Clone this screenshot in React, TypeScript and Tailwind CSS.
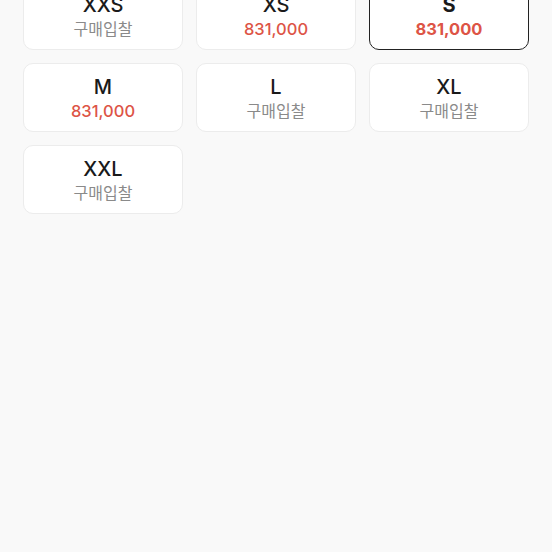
import React from "react";

type Item = { size: string; price?: string; selected?: boolean };

const items: Item[] = [
  { size: "XXS" },
  { size: "XS", price: "831,000" },
  { size: "S", price: "831,000", selected: true },
  { size: "M", price: "831,000" },
  { size: "L" },
  { size: "XL" },
  { size: "XXL" },
];

export default function App() {
  return (
    <div
      className="w-[552px] h-[552px] overflow-hidden bg-[#f9f9f9]"
      style={{ fontFamily: 'Inter, "Noto Sans CJK KR", sans-serif' }}
    >
      <div className="grid grid-cols-[160px_160px_160px] gap-[13px] pl-[23px] mt-[-19px]">
        {items.map((it) => (
          <div
            key={it.size}
            className={
              it.selected
                ? "h-[69px] rounded-[10px] bg-white border-[1.5px] border-[#222] flex flex-col items-center pt-[11px]"
                : "h-[69px] rounded-[10px] bg-white border border-[#ececec] flex flex-col items-center pt-[11px]"
            }
          >
            <div
              className={
                it.selected
                  ? "text-[20px] leading-[24px] font-bold text-[#1a1a1a]"
                  : "text-[20px] leading-[24px] font-medium text-[#1a1a1a]"
              }
            >
              {it.size}
            </div>
            {it.price ? (
              <div
                className={
                  it.selected
                    ? "text-[16.5px] leading-[24px] font-bold text-[#dd5446]"
                    : "text-[16.5px] leading-[24px] font-medium text-[#dd5446]"
                }
              >
                {it.price}
              </div>
            ) : (
              <div className="text-[16px] leading-[24px] text-[#8a8a8a]">구매입찰</div>
            )}
          </div>
        ))}
      </div>
    </div>
  );
}
